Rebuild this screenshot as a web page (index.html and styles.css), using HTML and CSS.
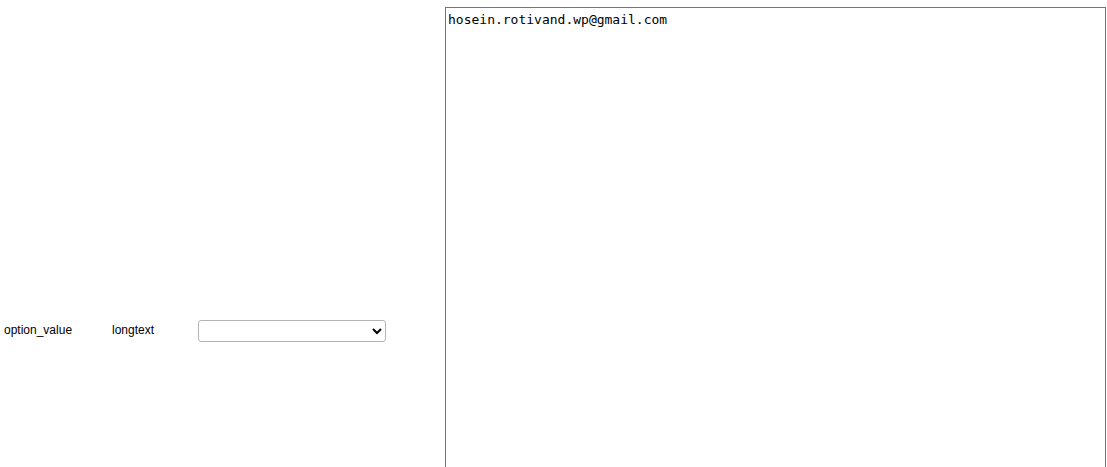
FILE: index.html
```html
<!DOCTYPE html>
<html>
<head>
<meta charset="utf-8">
<link rel="stylesheet" href="styles.css">
</head>
<body>
<div class="row">
  <div class="cell name">option_value</div>
  <div class="cell type">longtext</div>
  <div class="cell func">
    <select class="func-select"><option></option></select>
  </div>
  <div class="cell value">
    <textarea class="value-text">hosein.rotivand.wp@gmail.com</textarea>
  </div>
</div>
</body>
</html>
```
FILE: styles.css
```css
html, body {
  margin: 0;
  padding: 0;
  background: #fff;
}
body {
  font-family: "Liberation Sans", Arial, sans-serif;
  font-size: 12px;
  color: #000;
}
.row {
  display: flex;
  align-items: center;
  padding-top: 7px;
  padding-left: 4px;
}
.name {
  width: 108px;
  margin-top: -2px;
}
.type {
  width: 86px;
  margin-top: -2px;
}
.func {
  width: 247px;
}
.func-select {
  width: 188px;
  height: 22px;
  margin: 0;
  border: 1px solid #b4b4b4;
  border-radius: 3px;
  background-color: #fff;
  font-family: "Liberation Sans", Arial, sans-serif;
  font-size: 12px;
}
.value-text {
  display: block;
  box-sizing: border-box;
  width: 661px;
  height: 647px;
  margin: 0;
  padding: 3px 2px 2px;
  border: 1px solid #767676;
  font-family: "DejaVu Sans Mono", monospace;
  font-size: 13px;
  line-height: 18px;
  resize: none;
}
```
